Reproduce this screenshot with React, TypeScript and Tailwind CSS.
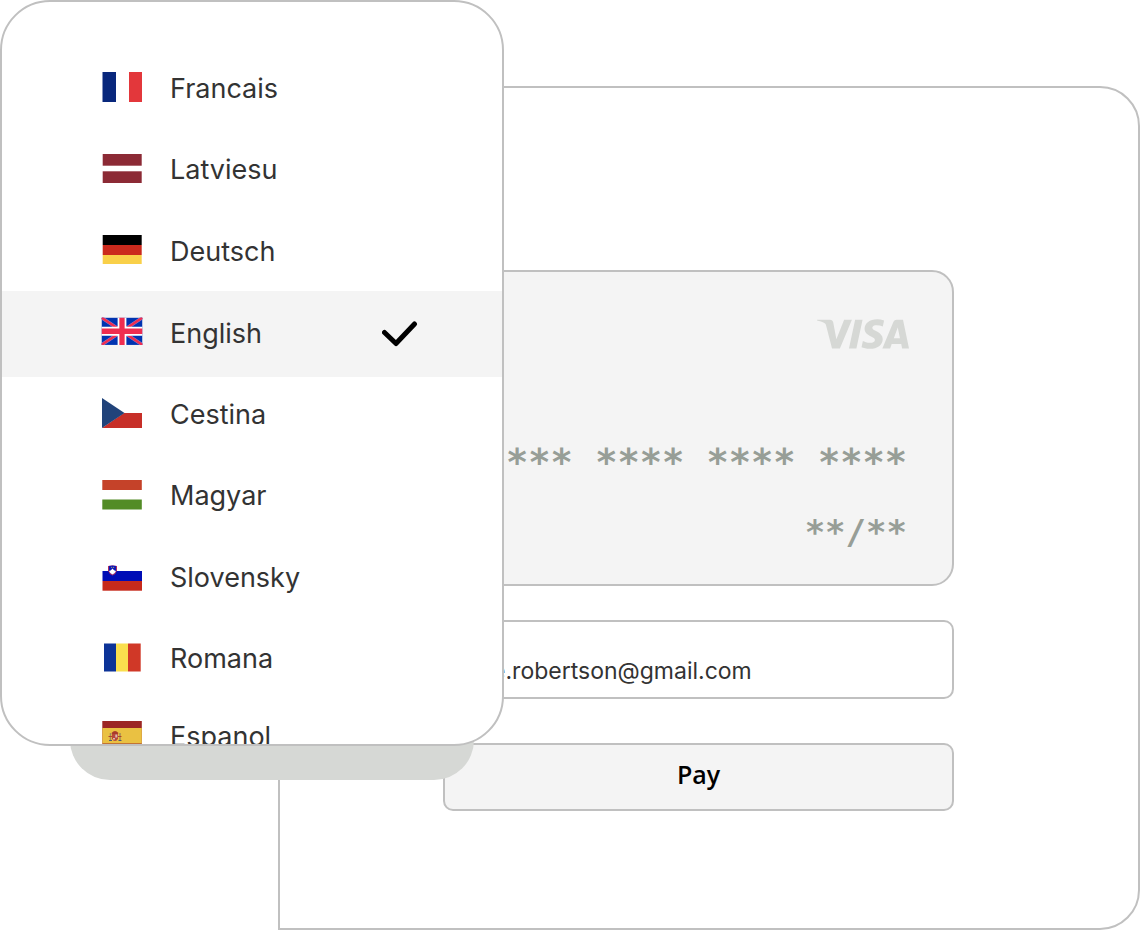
import { useState } from 'react'
import type { FormEvent, ReactNode } from 'react'
import { SiVisa } from 'react-icons/si'

type Language = {
    code: string
    name: string
    flag: ReactNode
}

const languages: Language[] = [
    {
        code: 'fr',
        name: 'Francais',
        flag: (
            <>
                <rect x="2.5" y="1" width="13.500" height="30" fill="#08277c" />
                <rect x="29" y="1" width="13" height="30" fill="#e3373b" />
            </>
        ),
    },
    {
        code: 'lv',
        name: 'Latviesu',
        flag: (
            <>
                <rect x="2.700" y="1" width="39" height="11.700" fill="#8c2a35" />
                <rect x="2.700" y="18.300" width="39" height="11.700" fill="#8c2a35" />
            </>
        ),
    },
    {
        code: 'de',
        name: 'Deutsch',
        flag: (
            <>
                <rect x="2.700" y="1" width="39" height="10" fill="#000" />
                <rect x="2.700" y="11" width="39" height="10" fill="#cb2a1d" />
                <rect x="2.700" y="21" width="39" height="9" fill="#f9d049" />
            </>
        ),
    },
    {
        code: 'en',
        name: 'English',
        flag: (
            <svg x="1.500" y="1.500" width="41" height="27.500" viewBox="0 0 42 28">
                <rect width="42" height="28" fill="#0033b0" />
                <path d="M0 0l42 28M42 0L0 28" stroke="#8a86d6" strokeWidth="3.400" />
                <path d="M0 0l42 28M42 0L0 28" stroke="#ef2d50" strokeWidth="2.600" />
                <path d="M21 0v28M0 14h42" stroke="#fff" strokeWidth="9" />
                <path d="M21 0v28M0 14h42" stroke="#ef2d50" strokeWidth="5.400" />
            </svg>
        ),
    },
    {
        code: 'cs',
        name: 'Cestina',
        flag: (
            <>
                <path d="M2 31l22-15h18v15z" fill="#c72f28" />
                <path d="M2 1l22.500 15L2 31z" fill="#21437a" />
            </>
        ),
    },
    {
        code: 'hu',
        name: 'Magyar',
        flag: (
            <>
                <rect x="2.300" y="1" width="39.500" height="10" fill="#c54229" />
                <rect x="2.300" y="20.500" width="39.500" height="10" fill="#538c26" />
            </>
        ),
    },
    {
        code: 'sl',
        name: 'Slovensky',
        flag: (
            <>
                <rect x="2.500" y="11" width="39.500" height="10" fill="#000db6" />
                <rect x="2.500" y="21" width="39.500" height="9.700" fill="#c72a1c" />
                <path d="M8 6q4.500-1 9 0v4.500q-1 3.500-4.500 5Q9 14 8 10.500z" fill="#d3304c" />
                <path d="M8.800 6q3.700-1 7.400 0v4.500q-1 3-3.700 4.200Q9.800 13.500 8.800 10.500z" fill="#0b17b8" />
                <path d="M9 11l2-.7 1.500-1.800 1.500 1.800 2 .7-1.300 2-2.200 1.500-2.200-1.500z" fill="#fff" />
                <circle cx="11.700" cy="7.200" r=".5" fill="#f3e04c" />
                <circle cx="13.700" cy="7.200" r=".5" fill="#f3e04c" />
            </>
        ),
    },
    {
        code: 'ro',
        name: 'Romana',
        flag: (
            <>
                <rect x="4" y="1.500" width="12" height="28" fill="#0c3397" />
                <rect x="16" y="1.500" width="12" height="28" fill="#fadf4e" />
                <rect x="28" y="1.500" width="12.700" height="28" fill="#d03827" />
            </>
        ),
    },
    {
        code: 'es',
        name: 'Espanol',
        flag: (
            <>
                <rect x="2.300" y="1" width="39.500" height="30" fill="#9c2624" />
                <rect x="2.300" y="8" width="39.500" height="15.500" fill="#eac142" />
                <path d="M10.500 13v8M20 13v8" stroke="#a08b5a" strokeWidth="1.500" />
                <path d="M9 20.500h3M18.500 20.500h3" stroke="#4d5a74" strokeWidth="1.200" />
                <path d="M8.500 16.500h3.500M18 16.500h3.500" stroke="#b0442c" strokeWidth="1.200" />
                <path d="M11.500 13q3.500-4 7 0l-1 1.500h-5z" fill="#a83a2c" />
                <path d="M12 14h6v4.500q-1 2.500-3 2.500t-3-2.500z" fill="#b8483a" />
                <path d="M15.300 14.500h2v3h-2zM13 18h2v1.500h-2z" fill="#d9b9b4" />
            </>
        ),
    },
]

type LanguageRowProps = {
    language: Language
    selected: boolean
    onSelect: (code: string) => void
}

function LanguageRow({ language, selected, onSelect }: LanguageRowProps) {
    return (
        <button
            type="button"
            aria-pressed={selected}
            onClick={() => onSelect(language.code)}
            className="flex h-full w-full items-center gap-[26px] pl-[98px] pr-[84px] text-left text-[27px] leading-8 text-[#333333]"
        >
            <svg className="mb-[3px] h-8 w-11 shrink-0" viewBox="0 0 44 32" aria-hidden="true">
                {language.flag}
            </svg>
            <span>{language.name}</span>
            {selected && (
                <svg className="ml-auto h-[26px] w-9" viewBox="0 0 36 26" fill="none" aria-hidden="true">
                    <path
                        d="M2.500 11.500l11.500 11L32.500 3"
                        stroke="#000"
                        strokeWidth="5"
                        strokeLinecap="round"
                        strokeLinejoin="round"
                    />
                </svg>
            )}
        </button>
    )
}

function LanguageMenu() {
    const [current, setCurrent] = useState('en')
    const last = languages[languages.length - 1]

    return (
        <nav aria-label="Language" className="absolute left-0 top-0 w-[504px] max-w-full">
            <div className="relative z-10 h-[746px] overflow-hidden rounded-[50px] border-2 border-[#c0c0c0] bg-white pt-[46px]">
                <ul className="grid h-[652px] auto-rows-fr">
                    {languages.slice(0, -1).map((language) => (
                        <li
                            key={language.code}
                            className={language.code === current ? '-mb-[3px] -mt-[2px] bg-[#f4f4f4]' : ''}
                        >
                            <LanguageRow
                                language={language}
                                selected={language.code === current}
                                onSelect={setCurrent}
                            />
                        </li>
                    ))}
                </ul>
                <div className={last.code === current ? 'h-[74px] bg-[#f4f4f4]' : 'h-[74px]'}>
                    <LanguageRow language={last} selected={last.code === current} onSelect={setCurrent} />
                </div>
            </div>
            <div className="-mt-[46px] ml-[70px] mr-[30px] h-20 rounded-b-[40px] bg-[#d6d8d5]" />
        </nav>
    )
}

function CardPreview() {
    return (
        <div className="flex flex-col items-end rounded-[22px] border-2 border-[#c0c0c0] bg-[#f4f4f4] px-[43px] pb-8 pt-4">
            <SiVisa className="h-[92px] w-[92px] text-[#d6d8d5]" title="Visa" />
            <div className="mt-[63px] flex flex-col items-end gap-[29px] pr-0.5 font-['DejaVu_Sans_Mono',monospace] font-bold text-[#979e97]">
                <p className="whitespace-nowrap text-[37px] leading-10">**** **** **** ****</p>
                <p className="text-[34px] leading-10">**/**</p>
            </div>
        </div>
    )
}

export default function App() {
    const [email, setEmail] = useState('jane.robertson@gmail.com')

    const handleSubmit = (e: FormEvent) => {
        e.preventDefault()
    }

    return (
        <main className="relative min-h-screen bg-white pt-[86px] font-['Inter',sans-serif]">
            <form
                onSubmit={handleSubmit}
                className="ml-[278px] flex flex-col rounded-r-[40px] border-2 border-[#c0c0c0] pb-[117px] pl-[163px] pr-[184px] pt-[182px]"
            >
                <CardPreview />
                <input
                    type="email"
                    aria-label="Email"
                    value={email}
                    onChange={(e) => setEmail(e.target.value)}
                    className="mt-[34px] h-[79px] w-full rounded-[10px] border-2 border-[#c0c0c0] bg-white px-[15px] pt-[22px] text-[23px] text-[#333333]"
                />
                <button
                    type="submit"
                    className="mt-11 h-[68px] rounded-[10px] border-2 border-[#c0c0c0] bg-[#f4f4f4] pb-1 font-['Open_Sans',sans-serif] text-[25px] font-semibold text-black"
                >
                    Pay
                </button>
            </form>
            <LanguageMenu />
        </main>
    )
}
